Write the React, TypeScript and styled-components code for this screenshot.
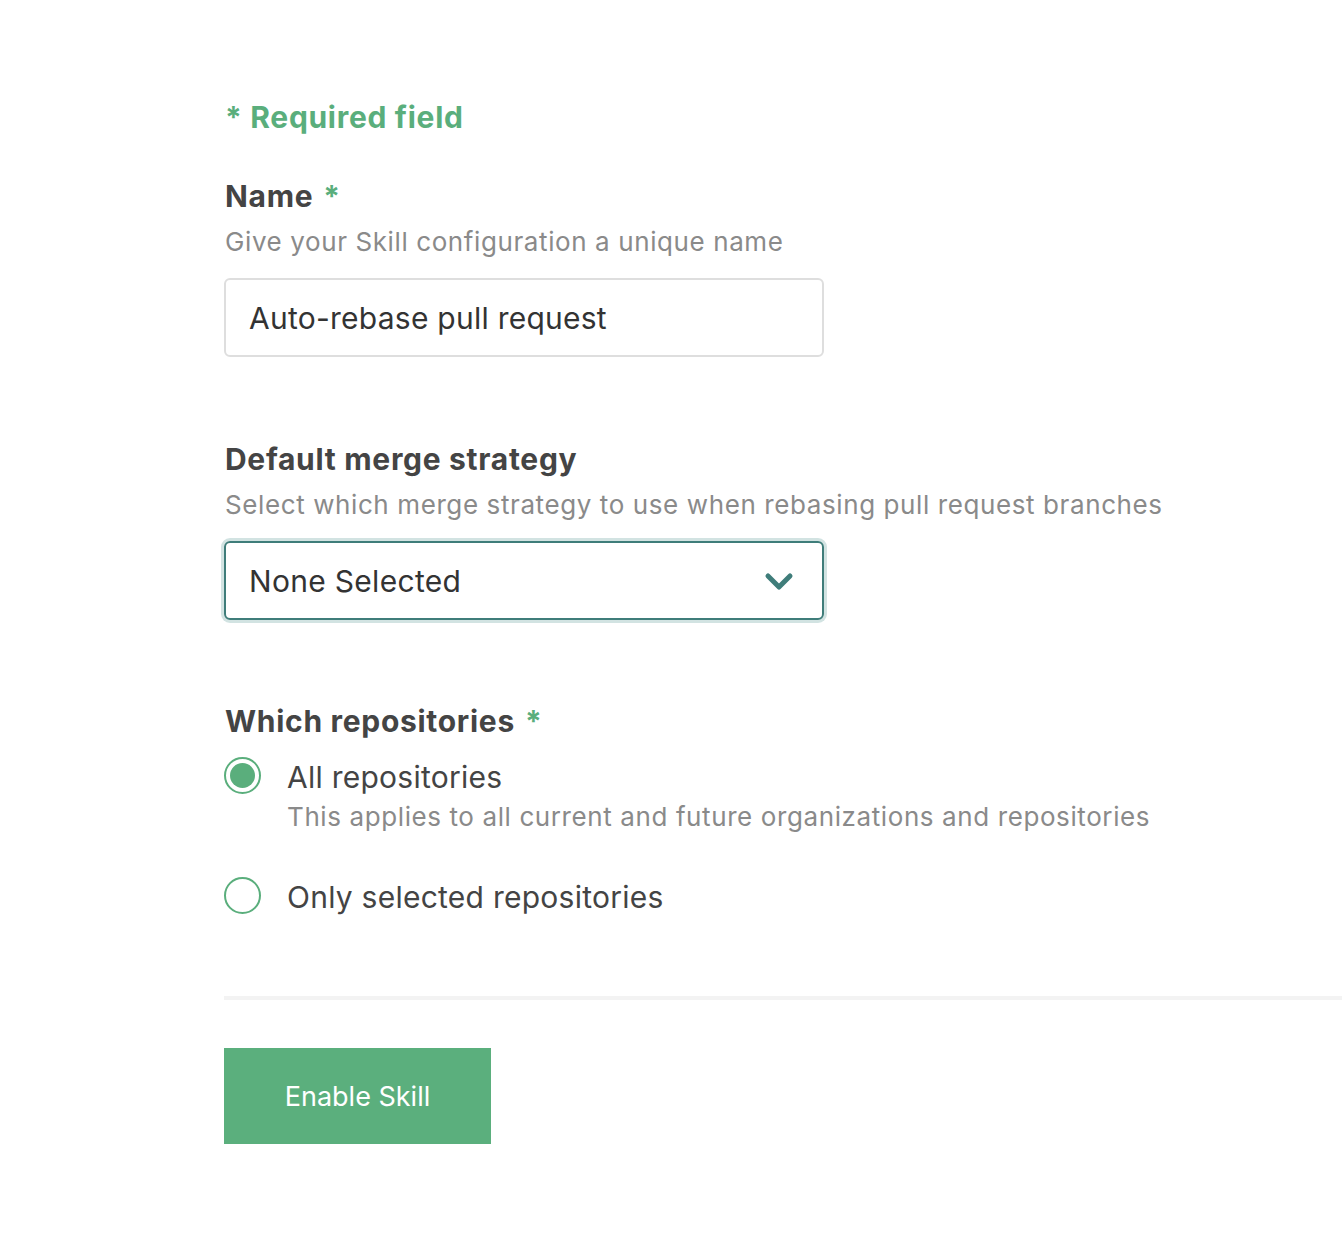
import React from "react";
import styled, { createGlobalStyle } from "styled-components";

const Global = createGlobalStyle`
  html, body { margin: 0; padding: 0; background: #fff; }
  body { font-family: Inter, "Noto Sans", sans-serif; color: #444; }
  * { box-sizing: border-box; }
`;

const GREEN = "#5aae7c";
const TEAL = "#3f7d7a";

const Page = styled.div`
  padding: 96px 0 90px 224px;
  display: flex;
  flex-direction: column;
`;

const RequiredNote = styled.div`
  color: ${GREEN};
  font-weight: 700;
  font-size: 30px;
  letter-spacing: 0.7px;
  line-height: 42px;
  margin-left: 1px;
`;

const Field = styled.div<{ $mt: number }>`
  margin-top: ${(p) => p.$mt}px;
  display: flex;
  flex-direction: column;
`;

const Label = styled.div`
  font-weight: 700;
  font-size: 30px;
  letter-spacing: 0.7px;
  line-height: 40px;
  color: #444;
  margin-left: 1px;
  margin-top: 2px;
`;

const Star = styled.span`
  color: ${GREEN};
  margin-left: 10px;
`;

const Hint = styled.div`
  font-size: 26px;
  letter-spacing: 0.6px;
  line-height: 32px;
  color: #8a8a8a;
  margin-top: 10px;
  margin-left: 1px;
`;

const TextInput = styled.div`
  margin-top: 20px;
  width: 600px;
  height: 79px;
  border: 2px solid #dedede;
  border-radius: 6px;
  display: flex;
  align-items: center;
  padding: 0 23px;
  font-size: 30px;
  letter-spacing: 0.25px;
  color: #333;
`;

const Select = styled.div`
  margin-top: 20px;
  width: 600px;
  height: 79px;
  border: 2px solid ${TEAL};
  border-radius: 6px;
  box-shadow: 0 0 0 3px #d2e3e2;
  display: flex;
  align-items: center;
  justify-content: space-between;
  padding: 0 28px 0 23px;
  font-size: 30px;
  letter-spacing: 0.3px;
  color: #333;
`;

const RadioRow = styled.div<{ $mt: number }>`
  margin-top: ${(p) => p.$mt}px;
  display: flex;
  align-items: flex-start;
  gap: 26px;
`;

const RadioCircle = styled.div<{ $checked?: boolean }>`
  width: 37px;
  height: 37px;
  border-radius: 50%;
  border: 2px solid ${GREEN};
  display: flex;
  align-items: center;
  justify-content: center;
  flex-shrink: 0;
  margin-top: 1px;
  &::after {
    content: "";
    display: ${(p) => (p.$checked ? "block" : "none")};
    width: 25px;
    height: 25px;
    border-radius: 50%;
    background: ${GREEN};
  }
`;

const RadioText = styled.div`
  display: flex;
  flex-direction: column;
  padding-top: 1px;
`;

const RadioLabel = styled.div`
  font-size: 30px;
  letter-spacing: 0.25px;
  line-height: 40px;
  color: #444;
`;

const RadioHint = styled.div`
  font-size: 26px;
  letter-spacing: 0.6px;
  line-height: 32px;
  color: #8a8a8a;
  margin-top: 4px;
`;

const Divider = styled.div`
  margin-top: 79px;
  height: 4px;
  background: #f3f3f3;
`;

const Button = styled.button`
  margin-top: 48px;
  align-self: flex-start;
  width: 267px;
  height: 96px;
  border: none;
  background: #5baf7d;
  color: #fff;
  font-family: Inter, "Noto Sans", sans-serif;
  font-size: 27px;
  padding: 0;
`;

const Chevron = () => (
  <svg width="30" height="20" viewBox="0 0 30 20">
    <path d="M4 5 L15 16 L26 5" fill="none" stroke={TEAL} strokeWidth="5" strokeLinecap="round" strokeLinejoin="round" />
  </svg>
);

export default function App() {
  return (
    <>
      <Global />
      <Page>
        <RequiredNote>* Required field</RequiredNote>
        <Field $mt={36}>
          <Label>
            Name<Star>*</Star>
          </Label>
          <Hint>Give your Skill configuration a unique name</Hint>
          <TextInput>Auto-rebase pull request</TextInput>
        </Field>
        <Field $mt={80}>
          <Label>Default merge strategy</Label>
          <Hint>Select which merge strategy to use when rebasing pull request branches</Hint>
          <Select>
            <span>None Selected</span>
            <Chevron />
          </Select>
        </Field>
        <Field $mt={79}>
          <Label>
            Which repositories<Star>*</Star>
          </Label>
          <RadioRow $mt={15}>
            <RadioCircle $checked />
            <RadioText>
              <RadioLabel>All repositories</RadioLabel>
              <RadioHint>This applies to all current and future organizations and repositories</RadioHint>
            </RadioText>
          </RadioRow>
          <RadioRow $mt={43}>
            <RadioCircle />
            <RadioText>
              <RadioLabel>Only selected repositories</RadioLabel>
            </RadioText>
          </RadioRow>
        </Field>
        <Divider />
        <Button>Enable Skill</Button>
      </Page>
    </>
  );
}
